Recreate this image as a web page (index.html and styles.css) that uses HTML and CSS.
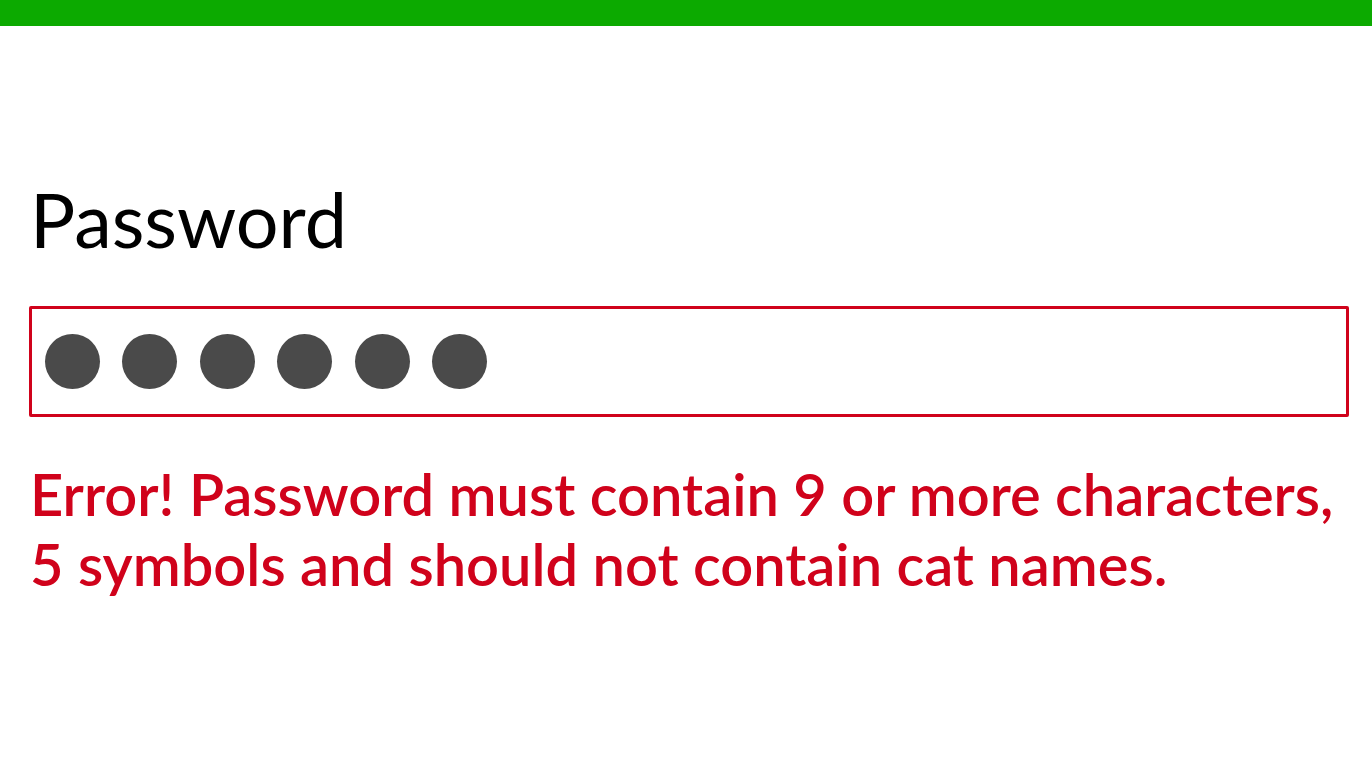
FILE: index.html
```html
<!DOCTYPE html>
<html lang="en">
<head>
    <meta charset="UTF-8">
    <meta name="viewport" content="width=device-width, initial-scale=1.0">
    <title>Password field error</title>
    <link rel="stylesheet" href="styles.css">
</head>
<body>
    <div class="topbar"></div>

    <div class="content">
        <div class="field">
            <label class="field-label" for="password">Password</label>

            <!-- masked value, drawn as dots -->
            <div class="password-box field-error" id="password">
                <span class="dot"></span>
                <span class="dot"></span>
                <span class="dot"></span>
                <span class="dot"></span>
                <span class="dot"></span>
                <span class="dot"></span>
            </div>

            <p class="error-message">Error! Password must contain 9 or more characters, 5 symbols and should not contain cat names.</p>
        </div>
    </div>
</body>
</html>
```

FILE: styles.css
```css
* {
    margin: 0;
    padding: 0;
    box-sizing: border-box;
}

body {
    font-family: Lato, 'Open Sans', sans-serif;
    background: #ffffff;
    color: #000000;
}

.topbar {
    height: 26px;
    background: #0caa00;
}

.content {
    padding: 147.5px 23px 0 29px;
}

.field-label {
    display: block;
    font-size: 75.5px;
    font-weight: 400;
    line-height: 1.2;
    padding-left: 1px;
}

.password-box {
    display: flex;
    align-items: center;
    gap: 22.4px;
    height: 111px;
    margin-top: 42px;
    padding-left: 13px;
    border: 3px solid #d0021b;
    border-radius: 2px;
}

.dot {
    width: 55px;
    height: 55px;
    border-radius: 50%;
    background: #4a4a4a;
}

.error-message {
    margin-top: 42px;
    max-width: 1320px;
    font-size: 57.8px;
    font-weight: 600;
    line-height: 70px;
    color: #d0021b;
    padding-left: 1px;
}
```
